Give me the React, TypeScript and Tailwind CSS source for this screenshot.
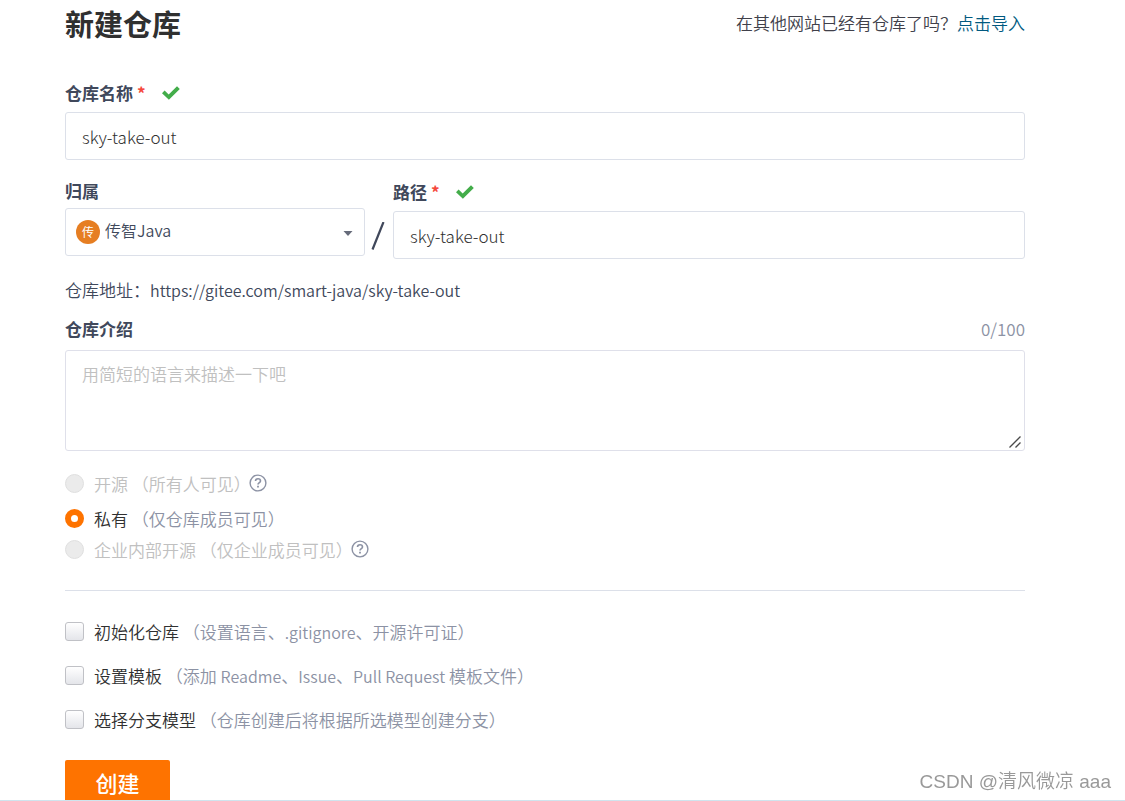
import { useState } from "react";
import type { ReactNode } from "react";

function CheckMark() {
  return (
    <svg viewBox="0 0 18 14" className="h-[14px] w-[18px] fill-[#43ad4a]" aria-hidden="true">
      <path d="M0 7.2 2.6 4.6 6.7 8.6 15 .3 17.8 2.9 6.9 13.7Z" />
    </svg>
  );
}

function HelpIcon() {
  return (
    <svg viewBox="0 0 18 18" className="-ml-0.5 mb-0.5 h-[18px] w-[18px] fill-none stroke-[#8c92a4]" aria-hidden="true">
      <circle cx="9" cy="9" r="7.9" strokeWidth="1.4" />
      <path d="M6.5 7.1C6.5 5.6 7.5 4.8 9 4.8s2.5.9 2.5 2.1C11.5 8.6 9 8.500 9 10.500" strokeWidth="1.6" />
      <path d="M9 11.700v1.700" strokeWidth="1.8" />
    </svg>
  );
}

function Required() {
  return <span className="ml-1 text-[#f5483b]">*</span>;
}

function Latin({ children }: { children: ReactNode }) {
  return <span className="text-base leading-none">{children}</span>;
}

type RadioRowProps = {
  value: string;
  label: string;
  note: string;
  disabled?: boolean;
  help?: boolean;
  selected: string;
  onSelect: (value: string) => void;
};

function RadioRow({ value, label, note, disabled, help, selected, onSelect }: RadioRowProps) {
  return (
    <div className="flex h-[31px] items-center">
      <input
        id={value}
        type="radio"
        name="visibility"
        checked={selected === value}
        disabled={disabled}
        onChange={() => onSelect(value)}
        className="h-[19px] w-[19px] shrink-0 appearance-none rounded-full border border-[#c9cbd2] bg-white checked:border-[6px] checked:border-[#fe7300] disabled:border-[#e0e0e0] disabled:bg-[#ebebeb]"
      />
      <label htmlFor={value} className={disabled ? "ml-[10px] text-[#c0c0c0]" : "ml-[10px] text-[#303030]"}>
        {label} <span className={disabled ? "text-[#c0c0c0]" : "text-[#8c92a4]"}>{note}</span>
      </label>
      {help && <HelpIcon />}
    </div>
  );
}

function CheckRow({ id, label, children }: { id: string; label: string; children: ReactNode }) {
  return (
    <div className="flex h-6 items-start">
      <input
        id={id}
        type="checkbox"
        className="mt-0.5 h-[19px] w-[19px] shrink-0 appearance-none rounded-[3px] border border-[#c0c1c6] bg-linear-to-b from-white to-[#e4e5ea] checked:border-[#fe7300] checked:from-[#fe7300] checked:to-[#fe7300]"
      />
      <label htmlFor={id} className="ml-[10px] text-[#303030]">
        {label} <span className="text-[#8c92a4]">{children}</span>
      </label>
    </div>
  );
}

const field =
  "h-12 w-full rounded-[3px] border border-[#dce0e9] bg-white px-4 font-light text-[#303030] outline-none focus:border-[#fe7300]";

export default function App() {
  const [name, setName] = useState("sky-take-out");
  const [path, setPath] = useState("sky-take-out");
  const [intro, setIntro] = useState("");
  const [visibility, setVisibility] = useState("private");

  return (
    <div className="h-screen overflow-hidden bg-white font-['Noto_Sans_CJK_SC',sans-serif] text-[17px] leading-6 font-[350] text-[#40485b]">
      <main className="pr-[100px] pl-[65px]">
        <header className="flex items-start justify-between">
          <h1 className="pt-[3px] text-[29px] leading-10 font-bold text-[#303030]">新建仓库</h1>
          <p className="pt-[11px] text-[#40404a]">
            在其他网站已经有仓库了吗？<a href="#import" className="text-[#005980]">点击导入</a>
          </p>
        </header>

        <form onSubmit={(e) => e.preventDefault()}>
          <div className="mt-[38px] flex items-center gap-4">
            <label htmlFor="name" className="font-bold">
              仓库名称<Required />
            </label>
            <CheckMark />
          </div>
          <input id="name" value={name} onChange={(e) => setName(e.target.value)} className={"mt-[7px] " + field} />

          <div className="mt-[19px] flex items-start">
            <div className="w-[300px] shrink-0">
              <label htmlFor="owner" className="block font-bold">
                归属
              </label>
              <div className="relative mt-[5px]">
                <select
                  id="owner"
                  className="h-12 w-full appearance-none rounded-[3px] border border-[#dce0e9] bg-white pr-8 pb-1 pl-[39px] text-base text-[#40485b] outline-none"
                >
                  <option>传智Java</option>
                </select>
                <span className="pointer-events-none absolute top-3 left-[11px] flex h-6 w-6 items-center justify-center rounded-full bg-[#e67e22] text-[12px] font-normal text-white">
                  传
                </span>
                <svg
                  viewBox="0 0 10 5"
                  className="pointer-events-none absolute top-[23px] right-3 h-[5px] w-[10px] fill-[#666b7a]"
                  aria-hidden="true"
                >
                  <path d="M.5 0h9L5 5Z" />
                </svg>
              </div>
            </div>
            <svg viewBox="0 0 28 28" className="mt-[43px] h-7 w-7 shrink-0 stroke-[#40485b]" aria-hidden="true">
              <path d="M7.500 27.500 18.500 0" strokeWidth="2.2" />
            </svg>
            <div className="grow">
              <div className="flex items-center gap-4 pt-[1px]">
                <label htmlFor="path" className="font-bold">
                  路径<Required />
                </label>
                <CheckMark />
              </div>
              <input id="path" value={path} onChange={(e) => setPath(e.target.value)} className={"mt-[7px] " + field} />
            </div>
          </div>

          <p className="mt-[19px]">
            仓库地址：<Latin>https://gitee.com/smart-java/sky-take-out</Latin>
          </p>

          <div className="mt-[15px] flex items-center justify-between">
            <label htmlFor="intro" className="font-bold">
              仓库介绍
            </label>
            <span className="text-[#8c92a4]">{intro.length}/100</span>
          </div>
          <div className="relative mt-[9px]">
            <textarea
              id="intro"
              maxLength={100}
              value={intro}
              onChange={(e) => setIntro(e.target.value)}
              placeholder="用简短的语言来描述一下吧"
              className="block h-[101px] w-full resize-y rounded-[3px] border border-[#dfe0ea] bg-white px-4 py-[11px] text-[#303030] outline-none placeholder:text-[#c0c0c0] [&::-webkit-resizer]:bg-transparent"
            />
            <svg
              viewBox="0 0 12 12"
              className="pointer-events-none absolute right-1 bottom-[3px] h-3 w-3 stroke-[#4a4a4a]"
              aria-hidden="true"
            >
              <path d="M.5 11.500 11.500.5M6.500 11.500 11.500 6.500" strokeWidth="1.3" />
            </svg>
          </div>

          <div role="radiogroup" aria-label="是否开源" className="mt-[17px]">
            <div className="pb-1">
              <RadioRow value="public" label="开源" note="（所有人可见）" disabled help selected={visibility} onSelect={setVisibility} />
            </div>
            <RadioRow value="private" label="私有" note="（仅仓库成员可见）" selected={visibility} onSelect={setVisibility} />
            <RadioRow value="inner" label="企业内部开源" note="（仅企业成员可见）" disabled help selected={visibility} onSelect={setVisibility} />
          </div>

          <hr className="mt-[25px] border-[#dce0e9]" />

          <div className="mt-[29px] flex flex-col gap-5">
            <CheckRow id="init" label="初始化仓库">
              （设置语言、<Latin>.gitignore</Latin>、开源许可证）
            </CheckRow>
            <CheckRow id="template" label="设置模板">
              （添加 <Latin>Readme</Latin>、<Latin>Issue</Latin>、<Latin>Pull Request</Latin> 模板文件）
            </CheckRow>
            <CheckRow id="branch" label="选择分支模型">
              （仓库创建后将根据所选模型创建分支）
            </CheckRow>
          </div>

          <button type="submit" className="mt-7 h-12 w-[105px] rounded-[2px] bg-[#fe7300] pb-1 text-[22px] font-medium text-white">
            创建
          </button>
        </form>
      </main>
      <div className="fixed inset-x-0 bottom-0 h-px bg-[#cfe4ee]" />
      <p className="fixed right-[14px] bottom-[7px] font-['Liberation_Sans','Noto_Sans_CJK_SC',sans-serif] text-[19px] text-[#999999]">
        CSDN @清风微凉 aaa
      </p>
    </div>
  );
}
